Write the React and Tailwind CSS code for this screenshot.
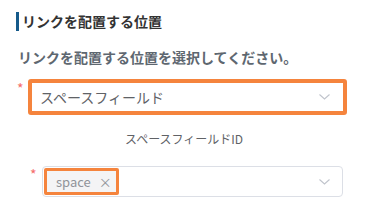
const Chevron = () => (
  <svg width="11" height="6" viewBox="0 0 11 6" fill="none" className="shrink-0">
    <path d="M0.5 0.5L5.5 5L10.5 0.5" stroke="#c0c4cc" strokeWidth="1.1" />
  </svg>
);

export default function App() {
  return (
    <div
      className="w-[370px] h-[216px] bg-white overflow-hidden relative"
      style={{ fontFamily: '"Noto Sans CJK JP", "Noto Sans", sans-serif' }}
    >
      {/* section heading */}
      <div className="flex items-center pt-[12px] pl-[16px]">
        <div className="w-[3px] h-[19px] bg-[#155a8a]" />
        <span className="ml-[3px] text-[14px] leading-[19px] font-bold text-[#333333]">
          リンクを配置する位置
        </span>
      </div>

      <p className="mt-[18px] pl-[18px] text-[14px] leading-[16px] font-bold text-[#5e6770]">
        リンクを配置する位置を選択してください。
      </p>

      {/* field select */}
      <div className="flex items-start mt-[14px] pl-[17px]">
        <span className="text-[#f56c6c] text-[14px] leading-[14px] mt-[2px] w-[11px]">*</span>
        <div className="w-[319px] h-[36px] border-[4px] border-[#f5843d] rounded-[3px] flex items-center justify-between pl-[8px] pr-[13px]">
          <span className="text-[14px] text-[#606266]">スペースフィールド</span>
          <Chevron />
        </div>
      </div>

      <div className="mt-[16px] pl-[125px] text-[12px] leading-[16px] text-[#606266]">
        スペースフィールドID
      </div>

      {/* id select */}
      <div className="flex items-start mt-[19px] pl-[30px]">
        <span className="text-[#f56c6c] text-[14px] leading-[14px] mt-[1px] w-[12px]">*</span>
        <div className="w-[301px] h-[31px] border border-[#dcdfe6] rounded-[4px] flex items-center justify-between pl-[1px] pr-[12px]">
          <div className="w-[75px] h-[27px] border-[3px] border-[#f5843d] rounded-[2px] bg-[#f4f4f5] flex items-center pl-[9px]">
            <span className="text-[13px] text-[#909399]">space</span>
            <span className="ml-[8px] text-[13px] leading-none text-[#909399]">×</span>
          </div>
          <Chevron />
        </div>
      </div>
    </div>
  );
}
